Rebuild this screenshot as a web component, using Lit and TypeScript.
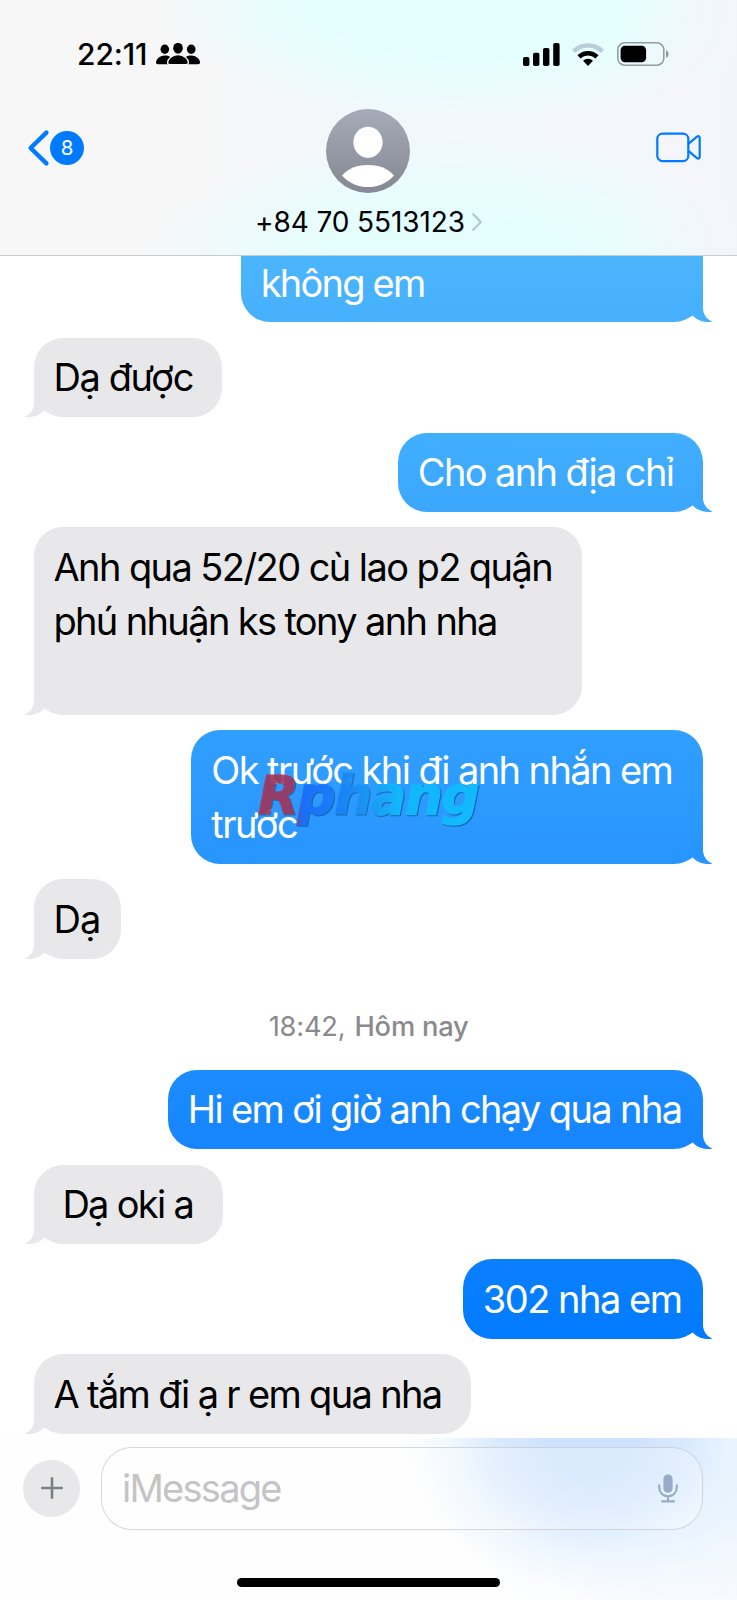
import { LitElement, html, css, svg, nothing } from "lit";
import { customElement, property } from "lit/decorators.js";
import { classMap } from "lit/directives/class-map.js";
import { styleMap } from "lit/directives/style-map.js";

interface Line {
  text: string;
  track?: number;
}

interface Message {
  sent?: boolean;
  width: number;
  lines: Line[];
  from?: string;
  to?: string;
}

const EARLIER: Message[] = [
  { sent: true, width: 462.5, from: "#4fbafc", to: "#46b0fd", lines: [{ text: "" }, { text: "không em", track: -1.8 }] },
  { width: 188, lines: [{ text: "Dạ được", track: -1.4 }] },
  { sent: true, width: 305.5, from: "#41aefe", to: "#3ba7fd", lines: [{ text: "Cho anh địa chỉ", track: -1.62 }] },
  {
    width: 548,
    lines: [
      { text: "Anh qua 52/20 cù lao p2 quận", track: -1.58 },
      { text: "phú nhuận ks tony anh nha", track: -1.64 },
      { text: "" },
    ],
  },
  {
    sent: true,
    width: 512,
    from: "#319fff",
    to: "#2795ff",
    lines: [
      { text: "Ok trước khi đi anh nhắn em", track: -1.6 },
      { text: "trước", track: -1.5 },
    ],
  },
  { width: 87, lines: [{ text: "Dạ", track: -0.8 }] },
];

const TODAY: Message[] = [
  { sent: true, width: 535.5, from: "#1c8cff", to: "#1685ff", lines: [{ text: "Hi em ơi giờ anh chạy qua nha", track: -1.62 }] },
  { width: 189, lines: [{ text: " Dạ oki a", track: -1.7 }] },
  { sent: true, width: 240.5, from: "#0a80ff", to: "#037bff", lines: [{ text: "302 nha em", track: -1.5 }] },
  { width: 437, lines: [{ text: "A tắm đi ạ r em qua nha", track: -1.67 }] },
];

@customElement("status-bar")
class StatusBar extends LitElement {
  static styles = css`
    :host {
      display: flex;
      align-items: center;
      height: 22px;
      padding: 43px 67px 0 77px;
    }
    .time {
      font-size: 30px;
      font-weight: 550;
      line-height: 22px;
      letter-spacing: -0.1px;
      margin-right: 9px;
    }
    .spacer {
      flex: 1;
    }
    svg {
      display: block;
      overflow: visible;
    }
    .wifi {
      margin: 0 13px 0 12px;
    }
  `;
  render() {
    return html`
      <span class="time">22:11</span>
      <svg width="44" height="22" viewBox="0 0 44 22">
        <ellipse cx="8.8" cy="6.2" rx="4.3" ry="4.7" />
        <ellipse cx="35.2" cy="6.2" rx="4.3" ry="4.7" />
        <ellipse cx="22" cy="5.2" rx="4.8" ry="5.5" />
        <path d="M8.8 12.4C3.2 12.4 0 16.8 0 19.3C0 20.8.8 21.2 2.2 21.2H14V13.8C12.6 12.8 11 12.4 8.8 12.4Z" />
        <path d="M35.2 12.4C40.8 12.4 44 16.8 44 19.3C44 20.8 43.2 21.2 41.8 21.2H30V13.8C31.4 12.8 33 12.4 35.2 12.4Z" />
        <path d="M22 11.7C15.6 11.7 11.6 16.4 11.6 19.4C11.6 21 12.6 21.7 14.2 21.7H29.8C31.4 21.7 32.4 21 32.4 19.4C32.4 16.4 28.4 11.7 22 11.7Z" stroke="#f6f8f9" stroke-width="1.3" />
      </svg>
      <span class="spacer"></span>
      <svg width="37" height="23" viewBox="0 0 37 23">
        <rect x="0" y="14" width="6.4" height="9" rx="1.8" />
        <rect x="10" y="9.8" width="6.4" height="13.2" rx="1.8" />
        <rect x="20" y="5" width="6.4" height="18" rx="1.8" />
        <rect x="30.2" y="0" width="6.4" height="23" rx="1.8" />
      </svg>
      <svg class="wifi" width="32" height="23" viewBox="0 0 32 23">
        <path d="M1.6 8.4A20.6 20.6 0 0 1 30.4 8.4" fill="none" stroke="#b9cdd6" stroke-width="4.4" />
        <path d="M7 13.9A13 13 0 0 1 25 13.9" fill="none" stroke="#000" stroke-width="4.4" />
        <path d="M11 17.7A7.2 7.2 0 0 1 21 17.7L16 23Z" />
      </svg>
      <svg width="53" height="24" viewBox="0 0 53 24">
        <rect x=".8" y=".8" width="46" height="22.4" rx="7" fill="none" stroke="#93a0a3" stroke-width="1.6" />
        <rect x="3.6" y="3.8" width="25.5" height="16.4" rx="4.4" />
        <path d="M49 8.2C52.3 9 52.3 15 49 15.8Z" fill="#8c999c" />
      </svg>
    `;
  }
}

@customElement("chat-header")
class ChatHeader extends LitElement {
  static styles = css`
    :host {
      display: block;
      box-sizing: border-box;
      height: 255.5px;
      border-bottom: 1.2px solid #c9cdd0;
      background:
        linear-gradient(90deg, rgba(245, 247, 251, 0) 84%, #f3f5fa 101%),
        radial-gradient(ellipse 320px 120px at 470px 0, #e4feff 0 50%, rgba(230, 254, 255, 0) 100%),
        radial-gradient(ellipse 320px 125px at 455px 262px, #e4feff 0 36%, rgba(232, 253, 255, 0) 100%),
        linear-gradient(90deg, #f7f7f7 27%, #f1f8fc 52%, #f4f6fa 100%);
    }
    .nav {
      display: grid;
      grid-template-columns: 1fr auto 1fr;
      align-items: start;
      padding: 44px 28px 0;
    }
    .back {
      display: flex;
      align-items: center;
      gap: 1px;
      padding-top: 20.7px;
    }
    .count {
      width: 34px;
      height: 34px;
      border-radius: 50%;
      background: #007aff;
      color: #fff;
      font-size: 20.5px;
      line-height: 34px;
      text-align: center;
    }
    .contact {
      display: flex;
      flex-direction: column;
      align-items: center;
    }
    .name {
      display: flex;
      align-items: center;
      gap: 7px;
      height: 34px;
      margin: 12px 0 0 0;
      font-size: 28px;
      letter-spacing: -0.1px;
      white-space: nowrap;
    }
    .video {
      justify-self: end;
      margin-right: 8.5px;
      padding-top: 23.5px;
    }
    svg {
      display: block;
      overflow: visible;
    }
  `;
  render() {
    return html`
      <status-bar></status-bar>
      <div class="nav">
        <div class="back">
          <svg width="21" height="36" viewBox="0 0 21 36">
            <path d="M18.4 2.6L2.6 18L18.4 33.4" fill="none" stroke="#007aff" stroke-width="4.4" stroke-linecap="round" stroke-linejoin="round" />
          </svg>
          <span class="count">8</span>
        </div>
        <div class="contact">
          <svg width="84" height="84" viewBox="0 0 84 84">
            <defs>
              <linearGradient id="disc" x1="0" y1="0" x2="0" y2="1">
                <stop offset="0" stop-color="#a6abb9" />
                <stop offset="1" stop-color="#858892" />
              </linearGradient>
            </defs>
            <circle cx="42" cy="42" r="42" fill="url(#disc)" />
            <ellipse cx="42" cy="33.3" rx="14.6" ry="15.6" fill="#fff" />
            <path d="M16 66.4C23 58.6 32 56 42 56S61 58.6 68 66.4C60 75 51 78 42 78S24 75 16 66.4Z" fill="#fff" />
          </svg>
          <div class="name">
            <span>+84 70 5513123</span>
            <svg width="10" height="18" viewBox="0 0 10 18">
              <path d="M1.2 1.2L8.8 9L1.2 16.8" fill="none" stroke="#b6c6d0" stroke-width="2.2" stroke-linecap="round" stroke-linejoin="round" />
            </svg>
          </div>
        </div>
        <svg class="video" width="45" height="30" viewBox="0 0 45 30">
          <g fill="none" stroke="#007aff" stroke-width="2.2" stroke-linejoin="round">
            <rect x="1.3" y="1.2" width="31" height="27.4" rx="5.2" />
            <path d="M32.4 11.4L41 4.2C42.2 3.3 43.7 3.6 43.7 5.2V24.6C43.7 26.2 42.2 26.5 41 25.6L32.4 18.4" />
          </g>
        </svg>
      </div>
    `;
  }
}

@customElement("chat-bubble")
class ChatBubble extends LitElement {
  static styles = css`
    :host {
      display: flex;
      flex: none;
    }
    .bubble {
      position: relative;
      box-sizing: border-box;
      padding: 12.8px 0 12.8px 19.4px;
      border-radius: 29px;
      background: #e8e8ea;
      color: #000;
    }
    .sent {
      margin-left: auto;
      padding-left: 20px;
      color: #fff;
    }
    .line {
      height: 54.1px;
      font-size: 38px;
      line-height: 55.4px;
      white-space: pre;
    }
    .tail {
      position: absolute;
      bottom: 0;
      left: -10px;
      transform: scaleX(-1);
    }
    .sent .tail {
      left: auto;
      right: -10px;
      transform: none;
    }
  `;
  @property({ attribute: false }) message!: Message;
  render() {
    const m = this.message;
    const fill = m.to ?? "#e8e8ea";
    const box: Record<string, string> = { width: `${m.width}px` };
    if (m.from) box.background = `linear-gradient(${m.from}, ${m.to})`;
    return html`
      <div class=${classMap({ bubble: true, sent: !!m.sent })} style=${styleMap(box)}>
        ${m.lines.map(
          (l) => html`<div class="line" style=${styleMap({ letterSpacing: `${l.track ?? 0}px` })}>${l.text || nothing}</div>`
        )}
        <svg class="tail" width="38" height="30" viewBox="-28 -30 38 30">
          ${svg`<path fill=${fill} d="M0 -30V-14C0 -8.5 3.2 -3 9.4 -.3C3 .5 -4.5 -.4 -10.2 -6.6L-16 -4.2L-8 -20Z" />`}
        </svg>
      </div>
    `;
  }
}

@customElement("message-composer")
class MessageComposer extends LitElement {
  static styles = css`
    :host {
      display: flex;
      flex-direction: column;
      align-items: center;
      box-sizing: border-box;
      height: 162px;
      padding-top: 9px;
      background:
        radial-gradient(ellipse 185px 140px at 590px 8px, rgba(203, 225, 253, 0.95) 0 22%, rgba(214, 232, 254, 0.9) 50%, rgba(232, 243, 254, 0.6) 75%, rgba(255, 255, 255, 0) 100%),
        radial-gradient(ellipse 260px 180px at 690px 30px, #e9f3fe 0 20%, rgba(250, 251, 253, 0) 100%),
        #fefefe;
    }
    .row {
      display: flex;
      align-items: center;
      gap: 20.5px;
      align-self: stretch;
      padding: 0 34px 0 23px;
    }
    .plus {
      display: grid;
      place-items: center;
      width: 57px;
      height: 57px;
      border-radius: 50%;
      background: #e8e8ea;
    }
    .field {
      display: flex;
      flex: 1;
      align-items: center;
      justify-content: space-between;
      box-sizing: border-box;
      height: 82.5px;
      padding: 0 24px 0 20.5px;
      border: 1.4px solid rgba(200, 202, 204, 0.75);
      border-radius: 31px;
      background: rgba(255, 255, 255, 0.28);
      color: #c4c4c6;
      font-size: 38px;
      letter-spacing: -1.73px;
    }
    .home {
      width: 263px;
      height: 9px;
      margin-top: 48px;
      border-radius: 5px;
      background: #000;
    }
    svg {
      display: block;
    }
  `;
  render() {
    return html`
      <div class="row">
        <div class="plus">
          <svg width="22" height="22" viewBox="0 0 22 22">
            <path d="M11 1.3V20.7M1.3 11H20.7" stroke="#7d7f87" stroke-width="2.6" stroke-linecap="round" />
          </svg>
        </div>
        <div class="field">
          <span>iMessage</span>
          <svg width="20" height="29" viewBox="0 0 20 29">
            <rect x="5.4" y=".4" width="9.2" height="18.4" rx="4.6" fill="#98abc6" />
            <path d="M1.2 11.2V13.6C1.2 18.6 4.8 22.2 10 22.2S18.8 18.6 18.8 13.6V11.2M10 22.2V27M4 27.4H16" fill="none" stroke="#98abc6" stroke-width="2.1" stroke-linecap="round" />
          </svg>
        </div>
      </div>
      <div class="home"></div>
    `;
  }
}

@customElement("app-root")
class AppRoot extends LitElement {
  static styles = css`
    :host {
      position: relative;
      display: flex;
      flex-direction: column;
      height: 1600px;
      overflow: hidden;
      background: #fff;
      color: #000;
      font-family: Inter, "Liberation Sans", sans-serif;
    }
    .thread {
      display: flex;
      flex: 1;
      flex-direction: column;
      justify-content: flex-end;
      gap: 15.2px;
      min-height: 0;
      box-sizing: border-box;
      padding: 0 33.7px 4px 34px;
      overflow: hidden;
    }
    .stamp {
      display: flex;
      flex: none;
      align-items: center;
      justify-content: center;
      gap: 9px;
      box-sizing: border-box;
      height: 80.2px;
      padding-top: 24px;
      color: #8a8a8e;
      font-size: 27.3px;
      letter-spacing: -0.2px;
    }
    .day {
      font-weight: 550;
    }
    .mark {
      position: absolute;
      left: 258px;
      top: 765px;
      font: italic 700 53px/62px "DejaVu Sans", sans-serif;
      letter-spacing: -1.3px;
      padding: 0 6px 4px 0;
      color: transparent;
      -webkit-text-stroke: 1.6px transparent;
      background: linear-gradient(90deg, rgba(180, 50, 85, 0.8) 15%, rgba(26, 112, 255, 0.9) 20%, rgba(27, 125, 255, 0.9) 32%, rgba(28, 160, 255, 0.8) 48%, rgba(18, 186, 255, 0.95) 62%, #12baff 100%);
      -webkit-background-clip: text;
      background-clip: text;
      filter: drop-shadow(1px 1.5px 0.5px rgba(15, 80, 140, 0.75));
    }
  `;
  render() {
    return html`
      <chat-header></chat-header>
      <main class="thread">
        ${EARLIER.map((m) => html`<chat-bubble .message=${m}></chat-bubble>`)}
        <div class="stamp"><span>18:42,</span><span class="day">Hôm nay</span></div>
        ${TODAY.map((m) => html`<chat-bubble .message=${m}></chat-bubble>`)}
      </main>
      <message-composer></message-composer>
      <div class="mark">Rphang</div>
    `;
  }
}
